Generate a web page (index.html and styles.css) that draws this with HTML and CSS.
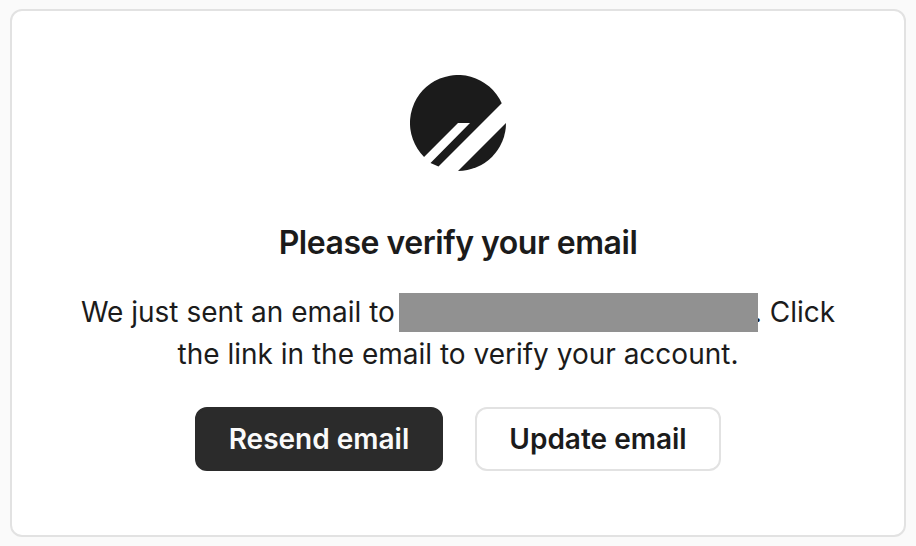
FILE: index.html
```html
<!DOCTYPE html>
<html lang="en">
<head>
    <meta charset="UTF-8">
    <meta name="viewport" content="width=device-width, initial-scale=1.0">
    <title>Verify your email</title>
    <link rel="stylesheet" href="styles.css">
</head>
<body>
    <div class="card">
        <svg class="logo" viewBox="0 0 96 96" width="96" height="96">
            <path d="M14.060 81.940A48 48 0 1 1 91.740 28.260L28.500 91.500L20.500 88L60 48H48Z" fill="#1b1b1b"/>
            <path d="M96 48A48 48 0 0 1 48 96Z" fill="#1b1b1b"/>
        </svg>
        <h1>Please verify your email</h1>
        <p class="message">We just sent an email to <span class="address"></span>. Click<br>the link in the email to verify your account.</p>
        <div class="actions">
            <button class="btn primary">Resend email</button>
            <button class="btn secondary">Update email</button>
        </div>
    </div>
</body>
</html>
```
FILE: styles.css
```css
* {
    box-sizing: border-box;
}
body {
    font-family: Inter, sans-serif;
    background: #fafafa;
    color: #1b1b1b;
    margin: 0;
    padding: 9px 10px;
}
.card {
    display: flex;
    flex-direction: column;
    align-items: center;
    height: 528px;
    padding-top: 64px;
    background: #fff;
    border: 2px solid #e2e2e2;
    border-radius: 12px;
}
.logo {
    display: block;
}
h1 {
    margin: 48px 0 0;
    font-size: 32px;
    line-height: 48px;
    font-weight: 600;
    letter-spacing: -0.47px;
}
.message {
    margin: 24px 0 0;
    font-size: 28px;
    line-height: 42px;
    text-align: center;
    white-space: nowrap;
}
/* covers the edge of the full stop that follows it */
.address {
    position: relative;
    display: inline-block;
    width: 359px;
    height: 39px;
    margin: -5px -4px;
    background: #919191;
    vertical-align: -5px;
}
.actions {
    display: flex;
    gap: 32px;
    margin-top: 32px;
}
.btn {
    height: 64px;
    border: 2px solid #e2e2e2;
    border-radius: 12px;
    padding: 0;
    font-family: inherit;
    font-size: 28px;
    font-weight: 600;
    cursor: pointer;
}
.primary {
    width: 248px;
    background: #2b2b2b;
    border-color: #2b2b2b;
    color: #fafafa;
}
.secondary {
    width: 246px;
    background: #fff;
    color: #1b1b1b;
}
```
